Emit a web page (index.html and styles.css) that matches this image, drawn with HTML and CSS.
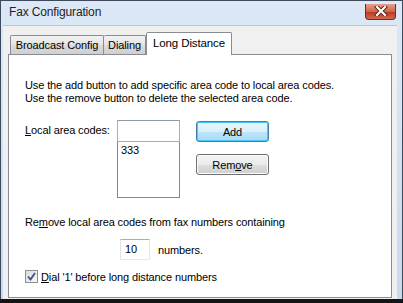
FILE: index.html
```html
<!DOCTYPE html>
<html lang="en">
<head>
    <meta charset="UTF-8">
    <title>Fax Configuration</title>
    <link rel="stylesheet" href="styles.css">
</head>
<body>
    <div class="window">
        <div class="titlebar">
            <span class="title">Fax Configuration</span>
            <div class="close">
                <svg width="14" height="10" viewBox="0 0 14 10">
                    <path d="M3 1 L11 9 M11 1 L3 9" stroke="#5a1d12" stroke-width="4" stroke-linecap="square"/>
                    <path d="M3 1 L11 9 M11 1 L3 9" stroke="#ffffff" stroke-width="2.2" stroke-linecap="square"/>
                </svg>
            </div>
        </div>

        <div class="client">
            <div class="tabs">
                <div class="tab tab-broadcast">Broadcast Config</div>
                <div class="tab tab-dialing">Dialing</div>
                <div class="tab tab-long active">Long Distance</div>
            </div>

            <div class="panel">
                <p class="intro">
                    Use the add button to add specific area code to local area codes.<br>
                    Use the remove button to delete the selected area code.
                </p>

                <div class="codes">
                    <div class="codes-label"><u>L</u>ocal area codes:</div>
                    <div class="codes-fields">
                        <div class="textbox"></div>
                        <div class="listbox">333</div>
                    </div>
                    <div class="codes-buttons">
                        <div class="btn btn-default">Add</div>
                        <div class="btn">Rem<u>o</u>ve</div>
                    </div>
                </div>

                <p class="strip">Re<u>m</u>ove local area codes from fax numbers containing</p>

                <div class="digits">
                    <div class="numbox">10</div>
                    <span>numbers.</span>
                </div>

                <div class="check">
                    <span class="checkbox">
                        <svg width="9" height="9" viewBox="0 0 9 9">
                            <path d="M1 4.5 L3.5 7.5 L8 1" fill="none" stroke="#3b4f8c" stroke-width="1.8"/>
                        </svg>
                    </span>
                    <span><u>D</u>ial '1' before long distance numbers</span>
                </div>
            </div>
        </div>
    </div>
</body>
</html>
```

FILE: styles.css
```css
* {
    margin: 0;
    padding: 0;
    box-sizing: border-box;
}

body {
    background: #141414;
    width: 403px;
    height: 303px;
    overflow: hidden;
    font-family: "Liberation Sans", Arial, sans-serif;
    font-size: 11px;
    letter-spacing: -0.12px;
    color: #000;
    white-space: nowrap;
}

.window {
    width: 403px;
    height: 299px;
    display: flex;
    flex-direction: column;
    background: linear-gradient(#dce8f6, #c8daf0);
    border: 1px solid #3c4a5c;
    border-bottom: none;
    padding: 0 5px 0 2px;
}

.titlebar {
    height: 24px;
    display: flex;
    align-items: center;
    justify-content: space-between;
    padding-left: 6px;
    flex-shrink: 0;
}

.title {
    font-size: 12px;
    letter-spacing: -0.15px;
    color: #1e1e1e;
    margin-top: -2px;
}

.close {
    width: 31px;
    height: 16px;
    margin-top: -3px;
    margin-right: 1px;
    border: 1px solid #6e2a1d;
    border-top: none;
    border-radius: 0 0 4px 4px;
    background: linear-gradient(#e6a08c, #d0654a 50%, #b8391f 55%, #d06b52);
    display: flex;
    align-items: center;
    justify-content: center;
}

.client {
    flex: 1;
    background: #f0f0f0;
    padding: 6px 5px 1px 5px;
    display: flex;
    flex-direction: column;
    border-top: 1px solid #b7c6d9;
}

.tabs {
    display: flex;
    align-items: flex-end;
    padding-left: 2px;
    height: 22px;
    position: relative;
    z-index: 1;
}

.tab {
    height: 19px;
    border: 1px solid #898c95;
    border-bottom: none;
    background: linear-gradient(#f3f3f3, #e3e3e3 50%, #dbdbdb 51%, #cfcfcf);
    display: flex;
    align-items: center;
    justify-content: center;
    border-radius: 2px 2px 0 0;
}

.tab-broadcast {
    width: 94px;
}

.tab-dialing {
    width: 42px;
    border-left: none;
}

.tab-long {
    width: 86px;
}

.tab.active {
    height: 23px;
    margin-bottom: -1px;
    background: #fff;
    padding-bottom: 3px;
    font-size: 11.5px;
}

.panel {
    flex: 1;
    background: #fff;
    border: 1px solid #898c95;
    padding: 24px 0 0 16px;
}

.intro {
    line-height: 13px;
}

.codes {
    display: flex;
    margin-top: 15px;
}

.codes-label {
    width: 92px;
    line-height: 13px;
    padding-top: 4px;
}

.codes-fields {
    width: 63px;
    display: flex;
    flex-direction: column;
}

.textbox {
    height: 22px;
    border: 1px solid #abadb3;
    border-top-color: #8e9aa8;
}

.listbox {
    height: 56px;
    border: 1px solid #828790;
    border-top: none;
    padding: 2px 3px;
    line-height: 13px;
}

.codes-buttons {
    display: flex;
    flex-direction: column;
    gap: 12px;
    margin-left: 16px;
    padding-top: 1px;
}

.btn {
    width: 73px;
    height: 21px;
    border: 1px solid #707070;
    border-radius: 3px;
    background: linear-gradient(#f4f4f4, #ebebeb 50%, #dddddd 51%, #cfcfcf);
    display: flex;
    align-items: center;
    justify-content: center;
    box-shadow: inset 0 0 0 1px #fbfbfb;
}

.btn-default {
    border-color: #3c7fb1;
    background: linear-gradient(#eaf6fd, #d9f0fc 50%, #bee6fd 51%, #a7d9f5);
    box-shadow: inset 0 0 0 1px #48c8f8;
}

.strip {
    margin-top: 18px;
    line-height: 13px;
}

.digits {
    display: flex;
    align-items: center;
    margin-top: 10px;
    margin-left: 95px;
    gap: 8px;
}

.numbox {
    width: 30px;
    height: 21px;
    border: 1px solid #abadb3;
    border-color: #abadb3 #e3e9ef #e3e9ef #e2e3ea;
    padding: 3px 4px;
    line-height: 13px;
}

.check {
    display: flex;
    align-items: center;
    gap: 3px;
    margin-top: 10px;
}

.checkbox {
    width: 13px;
    height: 13px;
    border: 1px solid #8e8f8f;
    background: linear-gradient(135deg, #dadcde, #f6f6f6);
    display: flex;
    align-items: center;
    justify-content: center;
}
```
